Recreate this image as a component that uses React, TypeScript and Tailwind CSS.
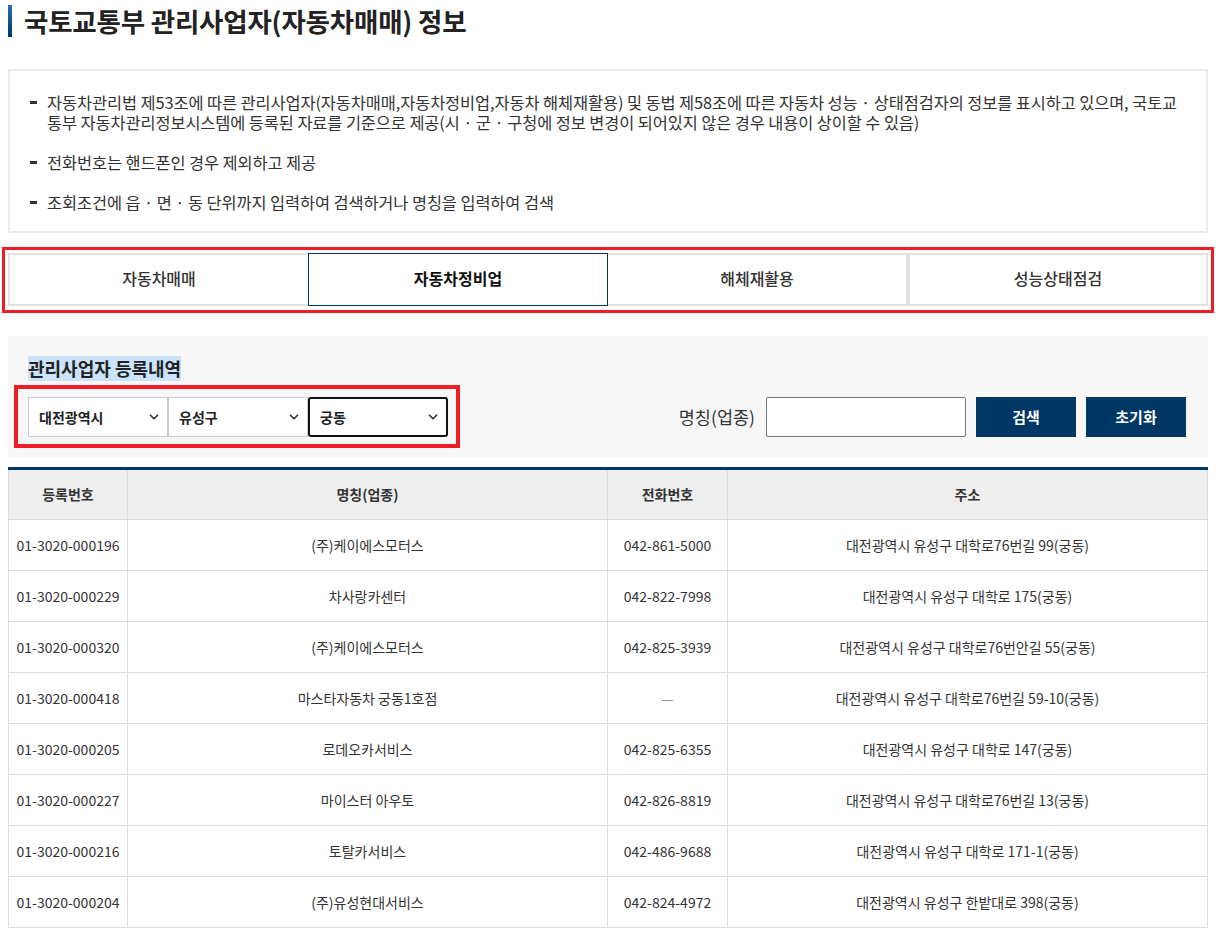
import { ChevronDown } from "lucide-react";

const font = { fontFamily: '"Noto Sans CJK KR", "Noto Sans", sans-serif' };

const rows = [
  ["01-3020-000196", "(주)케이에스모터스", "042-861-5000", "대전광역시 유성구 대학로76번길 99(궁동)"],
  ["01-3020-000229", "차사랑카센터", "042-822-7998", "대전광역시 유성구 대학로 175(궁동)"],
  ["01-3020-000320", "(주)케이에스모터스", "042-825-3939", "대전광역시 유성구 대학로76번안길 55(궁동)"],
  ["01-3020-000418", "마스타자동차 궁동1호점", "", "대전광역시 유성구 대학로76번길 59-10(궁동)"],
  ["01-3020-000205", "로데오카서비스", "042-825-6355", "대전광역시 유성구 대학로 147(궁동)"],
  ["01-3020-000227", "마이스터 아우토", "042-826-8819", "대전광역시 유성구 대학로76번길 13(궁동)"],
  ["01-3020-000216", "토탈카서비스", "042-486-9688", "대전광역시 유성구 대학로 171-1(궁동)"],
  ["01-3020-000204", "(주)유성현대서비스", "042-824-4972", "대전광역시 유성구 한밭대로 398(궁동)"],
];

const tabs = ["자동차매매", "자동차정비업", "해체재활용", "성능상태점검"];

function Select({ label, focused }: { label: string; focused?: boolean }) {
  return (
    <div
      className={`flex h-10 w-[140px] items-center justify-between bg-white pl-[10px] pr-[6px] text-[14px] font-bold text-[#222] ${
        focused ? "rounded-[3px] border-2 border-[#111]" : "border border-[#ccc]"
      }`}
    >
      <span>{label}</span>
      <ChevronDown size={14} strokeWidth={3} className="text-[#333]" />
    </div>
  );
}

export default function App() {
  return (
    <div className="min-h-[934px] w-[1216px] bg-white text-[#333]" style={font}>
      <div className="flex items-center px-2 pt-[5px]">
        <div className="h-8 w-1 bg-gradient-to-b from-[#2a6fb5] to-[#003764]" />
        <h1 className="ml-3 text-[26.5px] font-bold leading-8 tracking-[-0.2px] text-[#222]">
          국토교통부 관리사업자(자동차매매) 정보
        </h1>
      </div>

      <div className="mx-2 mt-8 border-2 border-[#ebebeb] px-5 pb-[19px] pt-[21px] text-[16.4px] leading-5 text-[#333]">
        {[
          "자동차관리법 제53조에 따른 관리사업자(자동차매매,자동차정비업,자동차 해체재활용) 및 동법 제58조에 따른 자동차 성능 · 상태점검자의 정보를 표시하고 있으며, 국토교통부 자동차관리정보시스템에 등록된 자료를 기준으로 제공(시 · 군 · 구청에 정보 변경이 되어있지 않은 경우 내용이 상이할 수 있음)",
          "전화번호는 핸드폰인 경우 제외하고 제공",
          "조회조건에 읍 · 면 · 동 단위까지 입력하여 검색하거나 명칭을 입력하여 검색",
        ].map((t, i) => (
          <div key={i} className={`flex ${i > 0 ? "mt-5" : ""}`}>
            <span className="mr-[10px] mt-[9px] h-[3px] w-[7px] shrink-0 bg-[#333]" />
            <p className="tracking-[-0.1px]">{t}</p>
          </div>
        ))}
      </div>

      <div className="mx-[2px] mt-[14px] border-[3px] border-[#ee1c25] px-[3px] pb-1 pt-[3px]">
        <div className="grid grid-cols-4">
          {tabs.map((t, i) => (
            <div
              key={t}
              className={`flex h-[53px] items-center justify-center pb-1 text-[16px] ${
                i === 1
                  ? "border border-[#003764] font-bold text-[#111]"
                  : "border-2 border-[#e2e2e2] font-medium text-[#333]"
              } ${i === 0 ? "border-r-0" : ""} ${i === 2 ? "border-l-0" : ""}`}
            >
              {t}
            </div>
          ))}
        </div>
      </div>

      <div className="mx-2 mt-[23px] bg-[#f7f7f7] pb-5 pl-5 pr-[22px] pt-5">
        <div className="inline-block bg-[#cce4fb] text-[18px] font-bold leading-[25px] text-[#222]">
          관리사업자 등록내역
        </div>
        <div className="mt-4 flex items-center justify-between">
          <div className="relative flex">
            <Select label="대전광역시" />
            <Select label="유성구" />
            <Select label="궁동" focused />
            <div className="pointer-events-none absolute -bottom-[11px] -left-[14px] -right-[12px] -top-[12px] border-[4px] border-[#ee1c25]" />
          </div>
          <div className="flex items-center">
            <span className="mr-[11px] text-[17.5px] text-[#333]">명칭(업종)</span>
            <div className="h-10 w-[200px] rounded-[2px] border border-[#777] bg-white" />
            <button className="ml-[10px] h-10 w-[100px] bg-[#003764] text-[15px] font-bold text-white">검색</button>
            <button className="ml-[10px] h-10 w-[100px] bg-[#003764] text-[15px] font-bold text-white">초기화</button>
          </div>
        </div>
      </div>

      <table className="mx-2 mt-[10px] w-[1200px] border-collapse border-t-[3px] border-t-[#003764] text-[14px] text-[#333]">
        <thead>
          <tr className="h-[51px] bg-[#eeeeee] font-bold">
            <th className="w-[119px] border border-t-0 border-[#dcdcdc] font-bold">등록번호</th>
            <th className="w-[480px] border border-t-0 border-[#dcdcdc] font-bold">명칭(업종)</th>
            <th className="w-[120px] border border-t-0 border-[#dcdcdc] font-bold">전화번호</th>
            <th className="border border-t-0 border-[#dcdcdc] font-bold">주소</th>
          </tr>
        </thead>
        <tbody>
          {rows.map((r) => (
            <tr key={r[0]} className="h-[51px]">
              <td className="border border-[#dcdcdc] text-center">{r[0]}</td>
              <td className="border border-[#dcdcdc] text-center">{r[1]}</td>
              <td className="border border-[#dcdcdc] text-center">
                {r[2] ? r[2] : <span className="text-[#999]">—</span>}
              </td>
              <td className="border border-[#dcdcdc] text-center">{r[3]}</td>
            </tr>
          ))}
        </tbody>
      </table>
    </div>
  );
}
